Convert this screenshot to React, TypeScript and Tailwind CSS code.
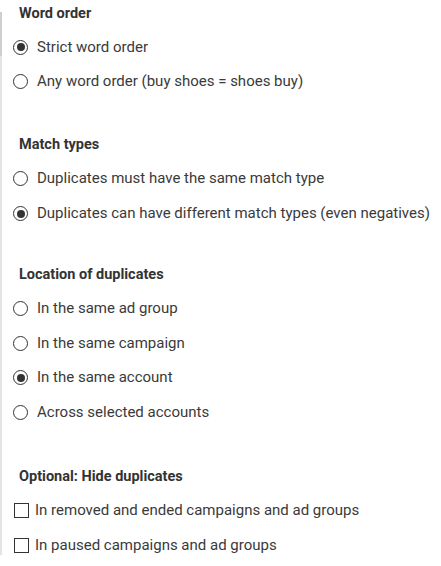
import React from "react";

type Opt = { label: string; checked?: boolean };

function Radio({ checked }: { checked?: boolean }) {
  return (
    <span className="w-[15px] h-[15px] rounded-full border-[1.5px] border-[#333] flex items-center justify-center shrink-0">
      {checked && <span className="w-[8px] h-[8px] rounded-full bg-[#333]" />}
    </span>
  );
}

function Checkbox() {
  return <span className="w-[15px] h-[15px] ml-[1px] border-[1.5px] border-[#333] shrink-0" />;
}

function Section({
  title,
  options,
  kind,
  rowClass,
  className,
}: {
  title: string;
  options: Opt[];
  kind: "radio" | "check";
  rowClass: string;
  className?: string;
}) {
  return (
    <div className={className}>
      <div className="h-[34px] pt-[2px] flex items-center pl-[17px] text-[14.5px] font-bold text-[#333]">{title}</div>
      {options.map((o) => (
        <div key={o.label} className={`${rowClass} flex items-center pl-[11px] text-[15px] text-[#3a3a3a]`}>
          {kind === "radio" ? <Radio checked={o.checked} /> : <Checkbox />}
          <span className={kind === "radio" ? "ml-[9px]" : "ml-[6px]"}>{o.label}</span>
        </div>
      ))}
    </div>
  );
}

export default function App() {
  return (
    <div
      className="w-[441px] h-[566px] bg-white flex overflow-hidden"
      style={{ fontFamily: "Roboto, 'Liberation Sans', sans-serif" }}
    >
      <div className="w-[2px] flex flex-col pt-[12px]">
        <div className="h-[44px] bg-[#cfcfcf]" />
        <div className="h-[499px] bg-[#e4e4e4]" />
      </div>
      <div className="flex-1 -mt-[4px]">
        <Section
          title="Word order"
          kind="radio"
          rowClass="h-[34px]"
          options={[
            { label: "Strict word order", checked: true },
            { label: "Any word order (buy shoes = shoes buy)" },
          ]}
        />
        <Section
          title="Match types"
          kind="radio"
          rowClass="h-[35px]"
          className="mt-[29px]"
          options={[
            { label: "Duplicates must have the same match type" },
            { label: "Duplicates can have different match types (even negatives)", checked: true },
          ]}
        />
        <Section
          title="Location of duplicates"
          kind="radio"
          rowClass="h-[34.7px]"
          className="mt-[26px]"
          options={[
            { label: "In the same ad group" },
            { label: "In the same campaign" },
            { label: "In the same account", checked: true },
            { label: "Across selected accounts" },
          ]}
        />
        <Section
          title="Optional: Hide duplicates"
          kind="check"
          rowClass="h-[35px]"
          className="mt-[29px]"
          options={[
            { label: "In removed and ended campaigns and ad groups" },
            { label: "In paused campaigns and ad groups" },
          ]}
        />
      </div>
    </div>
  );
}
